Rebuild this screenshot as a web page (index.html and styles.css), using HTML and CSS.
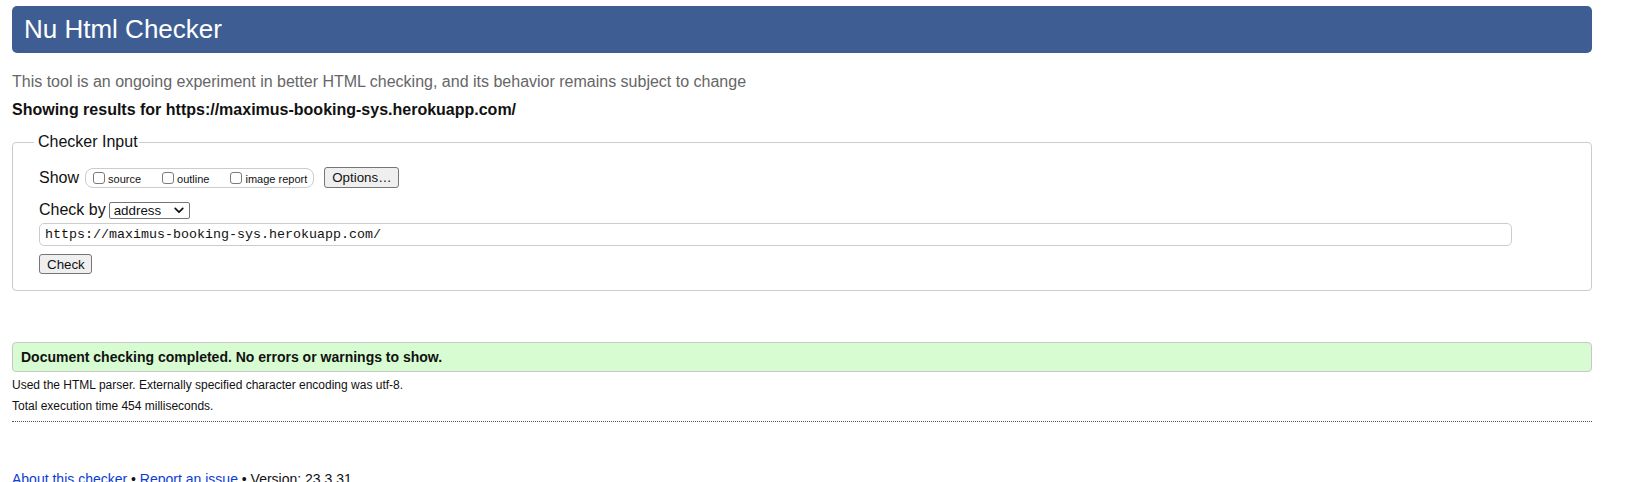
FILE: index.html
```html
<!DOCTYPE html>
<html lang="en">
<head>
<meta charset="utf-8">
<title>Nu Html Checker</title>
<link rel="stylesheet" href="styles.css">
</head>
<body>
<h1 class="site-title">Nu Html Checker</h1>
<p class="tagline">This tool is an ongoing experiment in better HTML checking, and its behavior remains subject to change</p>
<p class="results-for">Showing results for https://maximus-booking-sys.herokuapp.com/</p>
<form class="checker-form">
  <fieldset class="checker-input">
    <legend class="checker-legend">Checker Input</legend>
    <div class="show-row">
      <span class="row-label">Show</span>
      <span class="show-group">
        <label class="show-opt"><input type="checkbox" class="cb"><span>source</span></label>
        <label class="show-opt"><input type="checkbox" class="cb"><span>outline</span></label>
        <label class="show-opt"><input type="checkbox" class="cb"><span>image report</span></label>
      </span>
      <button type="button" class="btn options-btn">Options…</button>
    </div>
    <div class="checkby-row">
      <span class="row-label">Check by</span>
      <span class="select-wrap">
        <select class="checkby-select"><option>address</option></select>
        <svg class="select-chevron" width="10" height="7" viewBox="0 0 10 7" aria-hidden="true"><path d="M1.2 1.3 L5 5.1 L8.8 1.3" fill="none" stroke="#111" stroke-width="1.7" stroke-linecap="round" stroke-linejoin="round"/></svg>
      </span>
    </div>
    <input class="url-input" type="url" value="https://maximus-booking-sys.herokuapp.com/">
    <div class="check-row"><button type="button" class="btn check-btn">Check</button></div>
  </fieldset>
</form>
<div class="success">Document checking completed. No errors or warnings to show.</div>
<p class="details">Used the HTML parser. Externally specified character encoding was utf-8.</p>
<p class="details">Total execution time 454 milliseconds.</p>
<hr class="dotted-rule">
<p class="footer"><a href="#">About this checker</a> • <a href="#">Report an issue</a> • Version: 23.3.31</p>
</body>
</html>
```

FILE: styles.css
```css
html, body {
  background: #ffffff;
}
body {
  margin: 6px 37px 0 12px;
  font-family: "Liberation Sans", Arial, Helvetica, sans-serif;
  color: #111;
  font-size: 16px;
}
.site-title {
  margin: 0;
  height: 47px;
  box-sizing: border-box;
  padding: 0 12px 1px;
  background: #3e5e93;
  color: #ffffff;
  border-radius: 5px;
  font-size: 26px;
  font-weight: normal;
  line-height: 46px;
}
.tagline {
  margin: 19px 0 0;
  line-height: 20px;
  color: #666666;
}
.results-for {
  margin: 8px 0 0;
  line-height: 20px;
  font-weight: bold;
  color: #111;
}
.checker-form {
  margin: 13px 0 0;
}
.checker-input {
  margin: 0;
  padding: 0 26px 16px 26px;
  border: 1px solid #cccccc;
  border-radius: 4px;
  min-width: 0;
}
.checker-legend {
  margin-left: -5px;
  padding: 0 1px 0 4px;
  line-height: 18px;
  color: #111;
}
.show-row {
  display: flex;
  align-items: center;
  height: 21px;
  margin-top: 16px;
}
.row-label {
  line-height: 18px;
  color: #111;
}
.show-group {
  display: flex;
  align-items: center;
  margin-left: 6px;
  height: 20px;
  box-sizing: border-box;
  padding: 0 6px 0 7px;
  border: 1px solid #cccccc;
  border-radius: 8px;
}
.show-opt {
  display: flex;
  align-items: center;
  font-size: 11px;
  color: #111;
  margin-right: 21px;
}
.show-opt:last-child {
  margin-right: 0;
}
.show-opt span {
  padding-top: 2px;
}
.cb {
  appearance: none;
  -webkit-appearance: none;
  width: 12px;
  height: 12px;
  margin: 0 3px 0 0;
  border: 1px solid #7a7a7a;
  border-radius: 3px;
  background: #ffffff;
}
.btn {
  font-family: "Liberation Sans", Arial, Helvetica, sans-serif;
  font-size: 13.33px;
  color: #111;
  background: #efefef;
  border: 1px solid #767676;
  border-radius: 3px;
  box-sizing: border-box;
  padding: 0 7px;
  margin: 0;
}
.options-btn {
  margin-left: 10px;
  height: 21px;
  width: 75px;
}
.checkby-row {
  display: flex;
  align-items: center;
  height: 18px;
  margin-top: 13px;
}
.select-wrap {
  position: relative;
  margin-left: 3px;
  display: flex;
}
.checkby-select {
  appearance: none;
  -webkit-appearance: none;
  width: 81px;
  height: 17px;
  box-sizing: border-box;
  padding: 0 0 0 4px;
  border: 1px solid #767676;
  border-radius: 2px;
  background: #ffffff;
  font-family: "Liberation Sans", Arial, Helvetica, sans-serif;
  font-size: 13.33px;
  line-height: 15px;
  color: #111;
}
.select-chevron {
  position: absolute;
  right: 6px;
  top: 5px;
  pointer-events: none;
}
.url-input {
  display: block;
  margin-top: 4px;
  width: 1473px;
  height: 23px;
  box-sizing: border-box;
  padding: 0 5px;
  border: 1px solid #cccccc;
  border-radius: 5px;
  font-family: "Liberation Mono", "DejaVu Sans Mono", monospace;
  font-size: 13.33px;
  color: #111;
  background: #ffffff;
}
.check-row {
  margin-top: 8px;
  display: flex;
}
.check-btn {
  height: 20px;
  width: 53px;
}
.success {
  margin-top: 51px;
  height: 30px;
  box-sizing: border-box;
  padding: 0 8px;
  border: 1px solid #c8c8c8;
  border-radius: 4px;
  background: #d8fcd2;
  font-size: 14px;
  font-weight: bold;
  line-height: 28px;
  color: #111;
}
.details {
  margin: 6px 0 0;
  font-size: 12px;
  line-height: 15px;
  color: #111;
}
.details + .details {
  margin-top: 6px;
}
.dotted-rule {
  margin: 7px 0 0;
  border: 0;
  border-top: 1px dotted #555555;
  height: 0;
}
.footer {
  margin: 49px 0 0;
  font-size: 14px;
  line-height: 16px;
  color: #111;
}
.footer a {
  color: #0b3cd1;
}
```
